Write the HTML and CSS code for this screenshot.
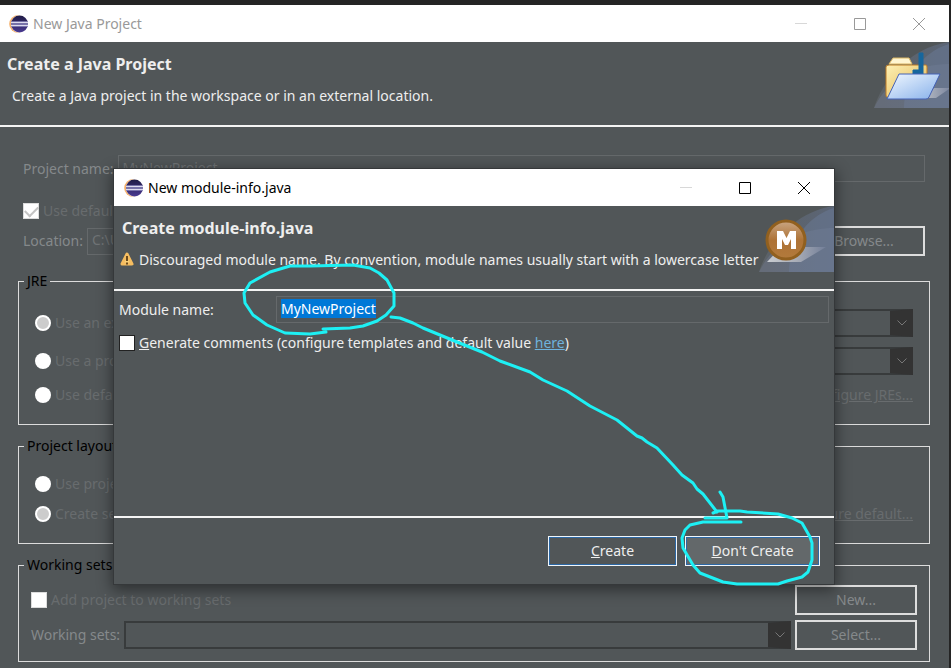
FILE: index.html
```html
<!DOCTYPE html>
<html lang="en">
<head>
<meta charset="utf-8">
<title>New Java Project</title>
<link rel="stylesheet" href="styles.css">
</head>
<body>
<svg class="defs" aria-hidden="true">
  <defs>
    <linearGradient id="orb" x1="0" y1="0" x2="0" y2="1"><stop offset="0" stop-color="#1f1b45"/><stop offset="1" stop-color="#4a3a92"/></linearGradient>
    <linearGradient id="back" x1="0" y1="0" x2="1" y2="1"><stop offset="0" stop-color="#fdf0b4"/><stop offset="1" stop-color="#e2b653"/></linearGradient>
    <linearGradient id="front" x1="0" y1="0" x2="1" y2="1"><stop offset="0" stop-color="#f1f8ff"/><stop offset="1" stop-color="#86b0ea"/></linearGradient>
    <linearGradient id="coin" x1="0" y1="0" x2="0" y2="1"><stop offset="0" stop-color="#c9a684"/><stop offset="0.5" stop-color="#ae7336"/><stop offset="1" stop-color="#b27a3c"/></linearGradient>
    <linearGradient id="sky" x1="0" y1="0" x2="1" y2="0"><stop offset="0" stop-color="#6a7077"/><stop offset="1" stop-color="#67779a"/></linearGradient>
    <linearGradient id="plate" x1="0" y1="0" x2="1" y2="0"><stop offset="0" stop-color="#c9ccd1"/><stop offset="0.5" stop-color="#a9adb7"/><stop offset="1" stop-color="#727e98"/></linearGradient>
    <linearGradient id="floor" x1="0" y1="0" x2="1" y2="0"><stop offset="0" stop-color="#b3b8c1"/><stop offset="1" stop-color="#7e88a0"/></linearGradient>
    <symbol id="eclipse" viewBox="0 0 20 20">
      <circle cx="9.200" cy="10" r="9" fill="#f5b06a"/>
      <circle cx="11" cy="10" r="9" fill="#fff"/>
      <circle cx="10.500" cy="10" r="8.500" fill="url(#orb)"/>
      <path d="M2 8.500h17M2 11.500h17" stroke="#8f8abf" stroke-width="2.500"/>
      <path d="M2 8.500h17M2 11.500h17" stroke="#dddbee" stroke-width="1"/>
    </symbol>
    <symbol id="swoosh" viewBox="0 0 75 66">
      <path d="M0 66C8 40 34 6 75 0V66Z" fill="url(#sky)" opacity=".45"/>
      <path d="M30 66C30 36 48 10 75 2V66Z" fill="#6f7f9f" opacity=".4"/>
      <path d="M0 66C14 36 44 22 75 22V66Z" fill="#75829c" opacity=".35"/>
    </symbol>
  </defs>
</svg>

<main class="window">
  <header class="titlebar inactive">
    <svg class="app-icon"><use href="#eclipse"/></svg>
    <span class="title">New Java Project</span>
    <span class="caption">
      <button aria-label="Minimize"><svg viewBox="0 0 12 12"><path class="min" d="M0 5.5h12"/></svg></button>
      <button aria-label="Maximize"><svg viewBox="0 0 12 12"><path d="M.5.5h11v11H.5z"/></svg></button>
      <button aria-label="Close"><svg viewBox="0 0 12 12"><path d="M0 0l12 12M12 0L0 12"/></svg></button>
    </span>
  </header>

  <section class="banner">
    <div class="banner-text">
      <h1>Create a Java Project</h1>
      <p>Create a Java project in the workspace or in an external location.</p>
    </div>
    <svg class="banner-art" viewBox="0 0 75 66">
      <use href="#swoosh"/>
      <path d="M52 56L60 46H75V47L62 56Z" fill="url(#floor)"/>
      <path d="M15 23H52Q53 23 53 25V55H13Q12 55 12 53V25Q12 23 15 23Z" fill="url(#back)" stroke="#bd7b24"/>
      <path d="M15 22L19 16H35L38 22Z" fill="#fff6d2" stroke="#d9b563"/>
      <path d="M45 11H49V33H39V28H45Z" fill="#16669d" stroke="#16669d"/>
      <path d="M25 32H66L55 55Q54 57 52 57H13Z" fill="url(#front)" stroke="#4562b5" stroke-linejoin="round"/>
    </svg>
  </section>

  <form class="content">
    <div class="row name-row">
      <label for="pname">Project name:</label>
      <input class="text" id="pname" type="text" value="MyNewProject" disabled>
    </div>
    <div class="row default-row">
      <input class="check" id="defloc" type="checkbox" checked disabled>
      <label class="dim" for="defloc">Use default location</label>
    </div>
    <div class="row location-row">
      <label for="loc">Location:</label>
      <input class="text" id="loc" type="text" value="C:\Users\workspace\MyNewProject" disabled>
      <button class="push" type="button" disabled>Browse...</button>
    </div>

    <fieldset class="jre">
      <legend>JRE</legend>
      <div class="row combo-row">
        <input class="radio" type="radio" name="jre" id="j1" checked disabled>
        <label class="dim" for="j1">Use an execution environment JRE:</label>
        <span class="combo"><select aria-label="Execution environment" disabled><option></option></select><svg viewBox="0 0 10 6"><path d="M.5.5l4.500 4.500 4.500-4.500"/></svg></span>
      </div>
      <div class="row combo-row">
        <input class="radio" type="radio" name="jre" id="j2" disabled>
        <label class="dim" for="j2">Use a project specific JRE:</label>
        <span class="combo"><select aria-label="Project JRE" disabled><option></option></select><svg viewBox="0 0 10 6"><path d="M.5.5l4.500 4.500 4.500-4.500"/></svg></span>
      </div>
      <div class="row option-row">
        <input class="radio" type="radio" name="jre" id="j3" disabled>
        <label class="dim" for="j3">Use default JRE</label>
        <a class="dim" href="#jres">Configure JREs...</a>
      </div>
    </fieldset>

    <fieldset class="layout">
      <legend>Project layout</legend>
      <div class="row option-row">
        <input class="radio" type="radio" name="layout" id="l1" disabled>
        <label class="dim" for="l1">Use project folder as root for sources and class files</label>
      </div>
      <div class="row option-row">
        <input class="radio" type="radio" name="layout" id="l2" checked disabled>
        <label class="dim" for="l2">Create separate folders for sources and class files</label>
        <a class="dim" href="#default">Configure default...</a>
      </div>
    </fieldset>

    <fieldset class="sets">
      <legend>Working sets</legend>
      <div class="row set-row">
        <input class="check" type="checkbox" id="addws" disabled>
        <label class="dim" for="addws">Add project to working sets</label>
        <button class="push" type="button" disabled>New...</button>
      </div>
      <div class="row set-row">
        <label for="ws">Working sets:</label>
        <span class="combo"><select id="ws" disabled><option></option></select><svg viewBox="0 0 10 6"><path d="M.5.5l4.500 4.500 4.500-4.500"/></svg></span>
        <button class="push" type="button" disabled>Select...</button>
      </div>
    </fieldset>
  </form>
</main>

<section class="dialog" role="dialog" aria-label="New module-info.java">
  <header class="titlebar">
    <svg class="app-icon"><use href="#eclipse"/></svg>
    <span class="title">New module-info.java</span>
    <span class="caption">
      <button aria-label="Minimize"><svg viewBox="0 0 12 12"><path class="min" d="M0 5.500h12"/></svg></button>
      <button aria-label="Maximize"><svg viewBox="0 0 12 12"><path d="M.5.5h11v11H.5z"/></svg></button>
      <button aria-label="Close"><svg viewBox="0 0 12 12"><path d="M0 0l12 12M12 0L0 12"/></svg></button>
    </span>
  </header>
  <div class="banner">
    <div class="banner-text">
      <h2>Create module-info.java</h2>
      <p><svg class="warn" viewBox="0 0 16 16"><path d="M8 2L13 12H3Z" fill="#fbd27a" stroke="#f6bd60" stroke-width="3" stroke-linejoin="round"/><path d="M8 4v5M8 10.500v2" stroke="#6b4a1c" stroke-width="2"/></svg>Discouraged module name. By convention, module names usually start with a lowercase letter</p>
    </div>
    <svg class="banner-art" viewBox="0 0 75 66">
      <use href="#swoosh"/>
      <path d="M8 56L22 41H67L42 56Z" fill="url(#plate)"/>
      <circle cx="27" cy="34" r="19" fill="url(#coin)" stroke="#91601f" stroke-width="3"/>
      <path d="M18 43V25H24L27.500 32L31 25H37V43H32V33L29 39H26L23 33V43Z" fill="#fff"/>
    </svg>
  </div>
  <div class="dialog-body">
    <div class="row module-row">
      <label for="mname">Module name:</label>
      <input class="text" id="mname" type="text" value="MyNewProject">
    </div>
    <div class="row comment-row">
      <input class="check" type="checkbox" id="gen">
      <label for="gen"><u>G</u>enerate comments (configure templates and default value <a href="#here">here</a>)</label>
    </div>
  </div>
  <footer class="actions">
    <button type="button"><u>C</u>reate</button>
    <button type="button" class="hover"><u>D</u>on't Create</button>
  </footer>
</section>

<svg class="ink" viewBox="0 0 951 668" aria-hidden="true">
  <path d="M323 329L350 328L363 326L377 321L386 315L394 306V293L387 280L379 273L370 268L353 265L310 266H290L270 272L250 283L244 293L245 303L253 315L267 325L285 333L310 334L326 332"/>
  <path d="M391 317L400 318L413 323L423 328L457 342L482 352L500 361L530 372L543 380L567 391L590 406L617 420L637 436L642 438L647 442L657 448L673 465L682 475L693 483L697 489L703 494L717 512"/>
  <path d="M720 492L723 497L727 518H705"/>
  <path d="M713 513L718 511H740L747 512L778 514L792 518L802 523L810 537L812 543V560L808 572L802 577L787 581L778 584H737L723 582L700 573L693 565L683 548L682 538L685 530L690 525L703 522H741"/>
</svg>
<script src="script.js"></script>
</body>
</html>
```
FILE: styles.css
```css
* { box-sizing: border-box; }

html { background: #242424; }

body {
  position: relative;
  margin: 0;
  min-height: 100vh;
  padding: 5px 2px 0 0;
  overflow: hidden;
  font: 14px/20px "Noto Sans", "Open Sans", sans-serif;
  color: #eeeeee;
}

.defs { position: absolute; width: 0; height: 0; }

button, input, select { font: inherit; color: inherit; margin: 0; }

.window {
  display: flex;
  flex-direction: column;
  min-height: calc(100vh - 5px);
  background: #515658;
}

.titlebar {
  display: flex;
  align-items: center;
  height: 37px;
  padding-left: 9px;
  background: #ffffff;
  color: #000000;
}
.titlebar.inactive { color: #999999; }
.app-icon { width: 20px; height: 20px; margin-right: 4px; }
.dialog .titlebar { padding-left: 10px; }
.title { flex: 1; }
.caption { display: flex; padding-right: 1px; }
.caption button {
  display: grid;
  place-items: center;
  width: 59px;
  height: 37px;
  padding: 0;
  border: 0;
  background: none;
}
.caption svg { width: 12px; height: 12px; fill: none; stroke: currentColor; }
.caption .min { stroke: #d8d8d8; }

.banner {
  display: flex;
  justify-content: space-between;
  height: 85px;
  border-bottom: 2px solid #f4f4f4;
}
.banner-text { flex: 1; padding: 12px 0 0 7px; white-space: nowrap; }
.banner h1, .banner h2 { margin: 0 0 12px; font-size: 16px; line-height: 20px; font-weight: 700; }
.banner p { margin: 0; padding-left: 5px; }
.banner-art { width: 75px; height: 66px; flex: none; }

.content { padding: 28px 19px 6px 18px; color: #85898b; }
.row { display: flex; align-items: center; white-space: nowrap; }
.dim { color: #686c6e; }
.row a { margin-left: auto; }

.text {
  flex: 1;
  min-width: 0;
  height: 27px;
  padding: 0 4px 3px;
  border: 1px solid #65696b;
  border-radius: 0;
  outline: 0;
  background: #515658;
}
.text:disabled { color: #6f7375; }

.name-row, .default-row, .location-row { padding: 0 5px; gap: 4px; }
.default-row { height: 20px; margin-top: 19px; }
.location-row { height: 30px; margin-top: 5px; }

.check, .radio {
  display: grid;
  place-items: center;
  flex: none;
  width: 16px;
  height: 16px;
  appearance: none;
  border: 1px solid #dcdcdc;
  background: #ffffff;
}
.check:checked::after {
  content: "";
  width: 11px;
  height: 6px;
  margin-top: -3px;
  border: solid #c4c4c4;
  border-width: 0 0 2px 2px;
  transform: rotate(-45deg);
}
.radio { border: 0; border-radius: 50%; }
.radio:checked { background: #cccccc; border: 2px solid #ffffff; }

.push {
  flex: none;
  width: 122px;
  height: 30px;
  padding: 0;
  border: 2px solid #dddddd;
  background: #515658;
  color: #85898b;
}

fieldset {
  position: relative;
  min-width: 0;
  margin: 15px 0 0;
  padding: 0 16px;
  border: 1px solid #dcdcdc;
}
legend { margin-left: -11px; padding: 0 3px; line-height: 20px; color: #000000; }

.jre { height: 154px; padding-top: 18px; margin-top: 15px; }
.layout { height: 108px; padding-top: 18px; margin-top: 11px; }
.sets { height: 107px; padding: 10px 12px 0; margin-top: 11px; }
.sets legend { margin-left: -7px; }

.combo-row, .option-row { gap: 4px; }
.combo-row { height: 28px; margin-bottom: 10px; }
.option-row { height: 20px; margin-bottom: 10px; }
.jre .combo { margin-left: auto; width: 50%; }

.combo { position: relative; display: flex; height: 28px; }
.combo select {
  width: 100%;
  appearance: none;
  border: 2px solid #383b3c;
  border-right: 23px solid #333333;
  border-radius: 0;
  background: #515658;
  opacity: 1;
}
.combo svg {
  position: absolute;
  right: 6px;
  top: 11px;
  width: 10px;
  height: 6px;
  fill: none;
  stroke: #777777;
}

.set-row { height: 30px; margin-bottom: 5px; gap: 4px; }
.set-row .push:last-child { margin-left: auto; }
.sets .combo { flex: 1; }

.dialog {
  position: absolute;
  top: 169px;
  left: 114px;
  right: 117px;
  background: #515658;
  box-shadow: 0 0 0 1px #35383a, 0 4px 14px 2px rgba(0, 0, 0, 0.45);
}
.dialog .banner-text { padding-left: 8px; }
.dialog .banner p { display: flex; align-items: center; gap: 4px; padding: 0; margin-left: -3px; }
.dialog .banner-art { margin-left: -12px; }
.warn { width: 16px; height: 16px; }
.dialog-body { min-height: 227px; padding: 5px 5px 0; border-bottom: 2px solid #f4f4f4; }
.module-row label { width: 157px; }
.comment-row { height: 20px; margin-top: 10px; gap: 4px; }
.comment-row .check { border-color: #222222; }
.comment-row a { color: #6fb2dc; }
.text::selection { background: #0078d7; color: #ffffff; }

.actions { display: flex; justify-content: flex-end; gap: 8px; padding: 18px 14px; }
.actions button {
  width: 129px;
  height: 30px;
  padding: 0;
  border: 1px solid #f0f6fb;
  box-shadow: inset 0 0 0 1px #2d68a5;
  background: #515658;
}
.actions .hover { width: 135px; background: #63686a; }

.ink {
  position: absolute;
  top: 0;
  left: 0;
  width: 951px;
  height: 668px;
  pointer-events: none;
  fill: none;
  stroke: #1df0f4;
  stroke-width: 3;
  stroke-linecap: round;
  stroke-linejoin: round;
}
```
FILE: script.js
```js
const moduleName = document.getElementById("mname");
moduleName.focus();
moduleName.select();
```
